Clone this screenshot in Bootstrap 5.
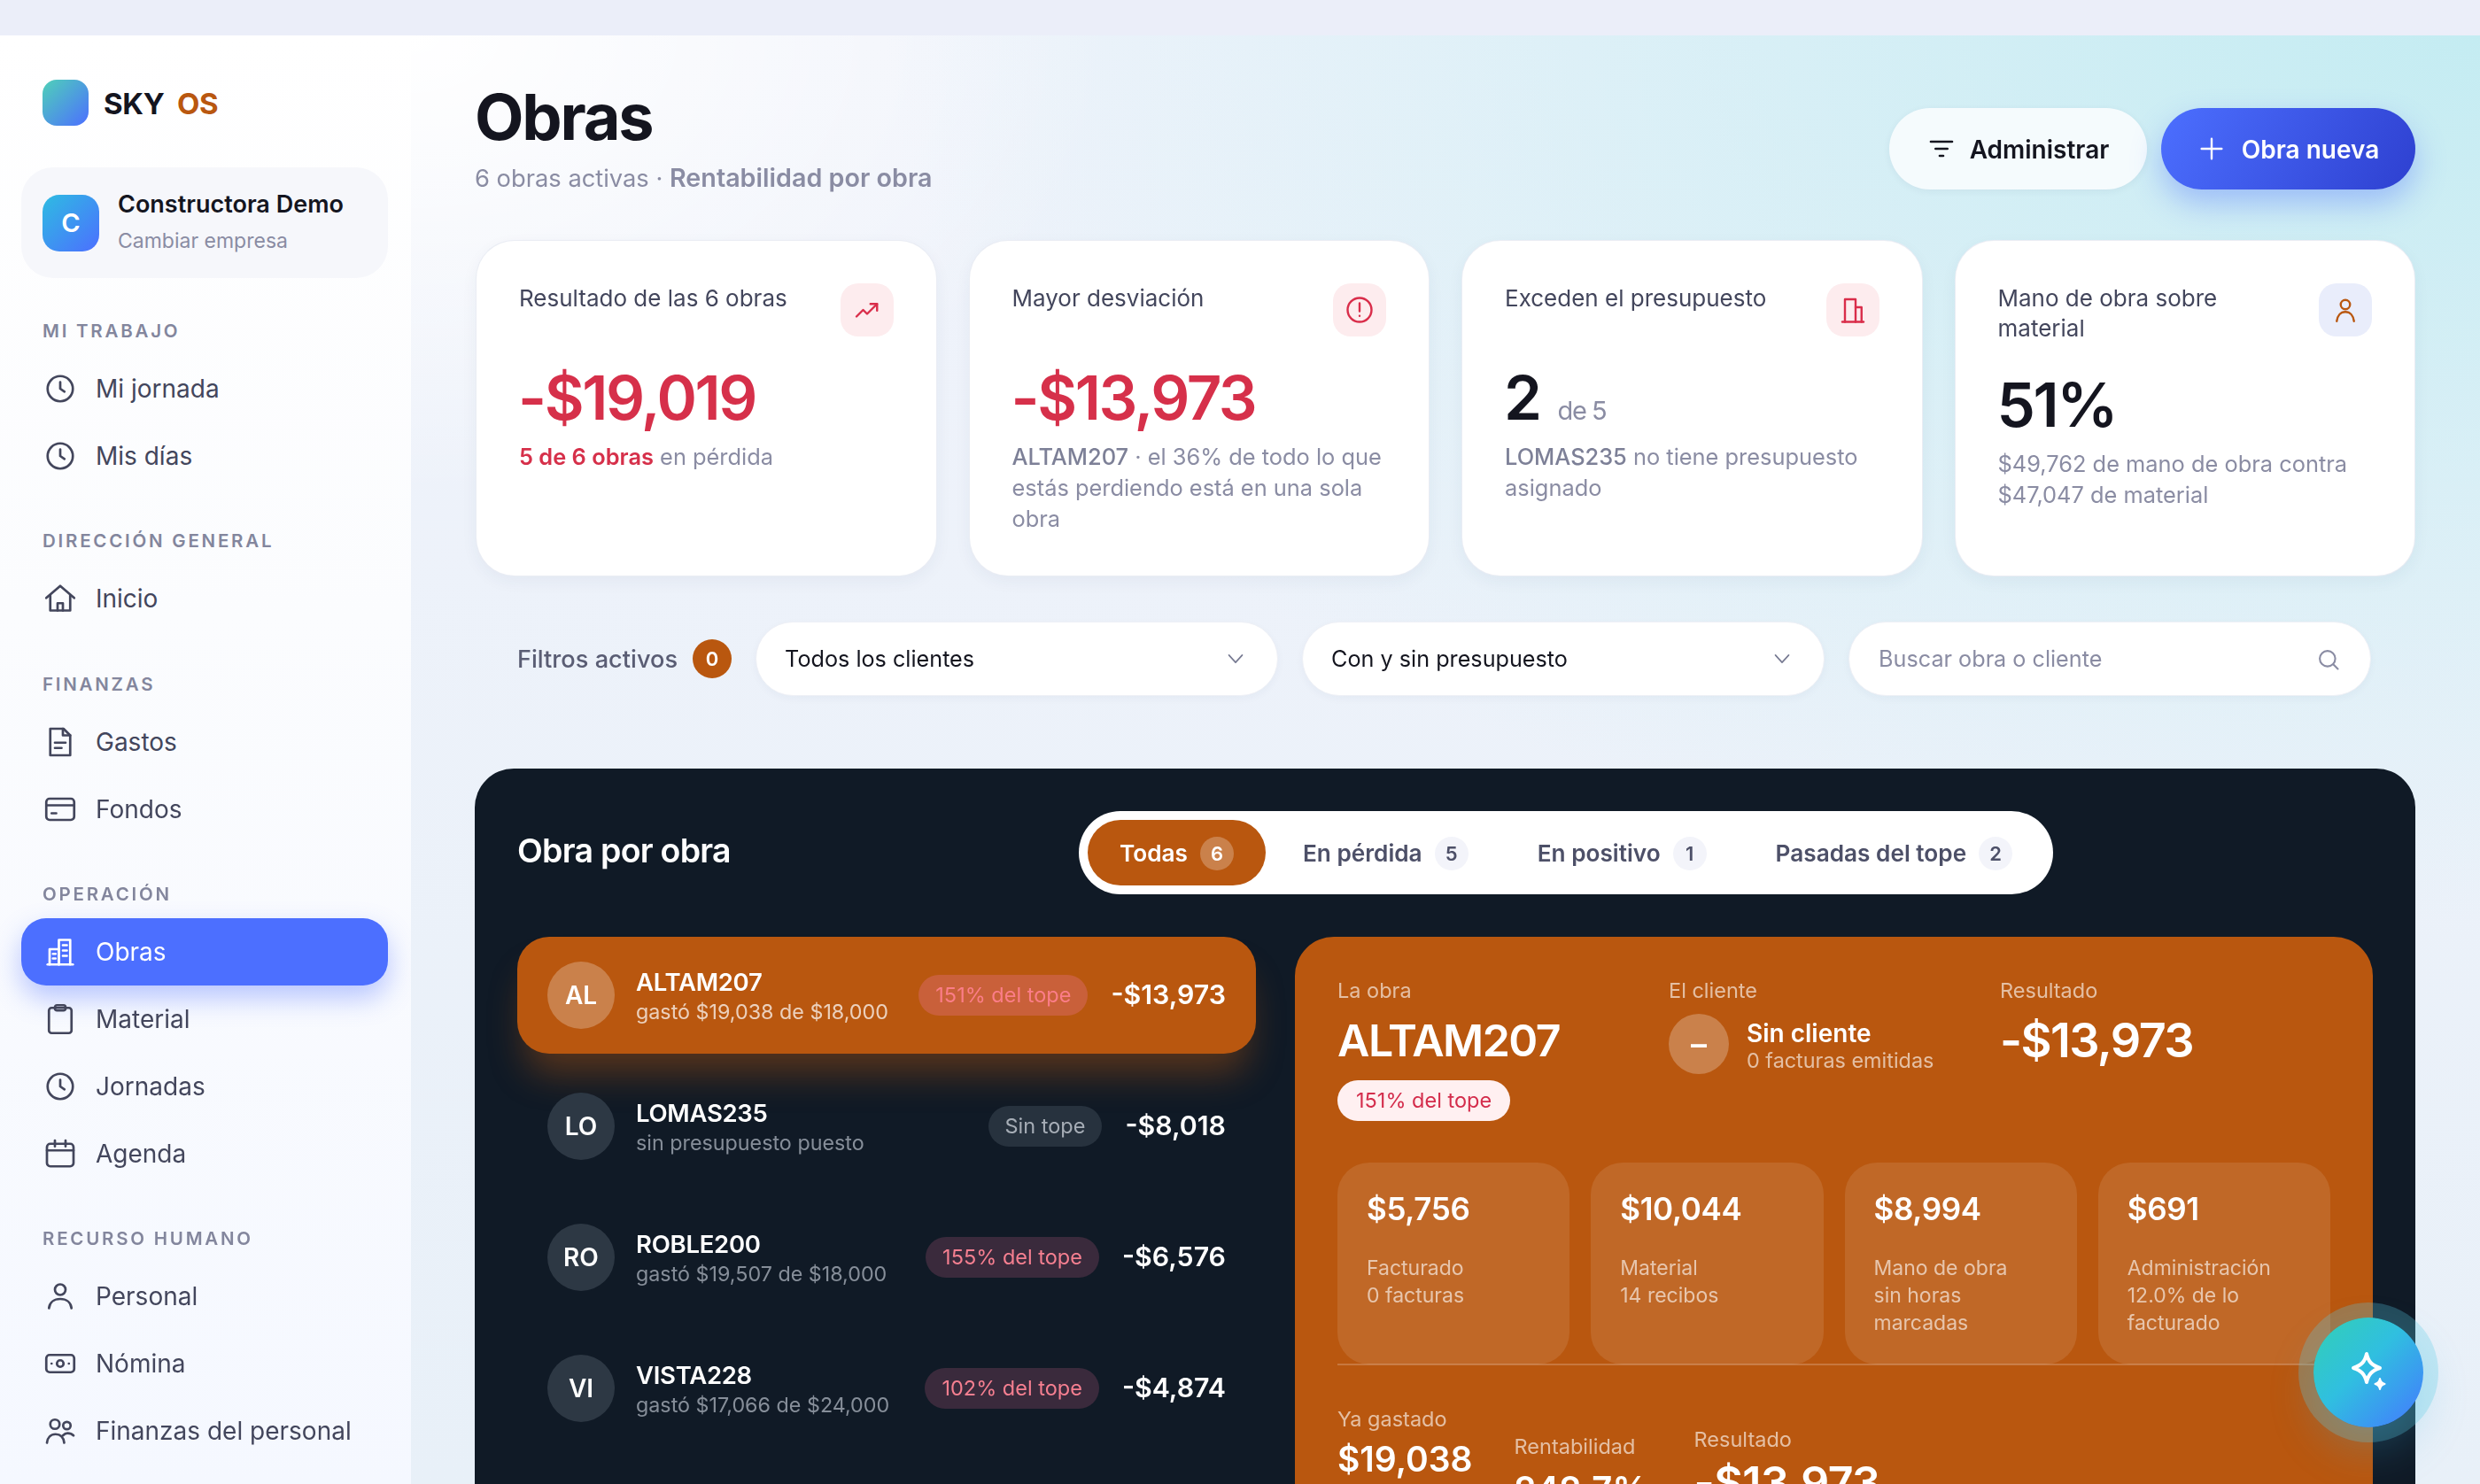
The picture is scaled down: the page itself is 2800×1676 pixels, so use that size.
<!DOCTYPE html>
<html lang="es">
<head>
    <meta charset="UTF-8">
    <meta name="viewport" content="width=device-width, initial-scale=1.0">
    <title>Obras - SKY OS</title>
    <link href="https://cdn.jsdelivr.net/npm/bootstrap@5.3.5/dist/css/bootstrap.min.css" rel="stylesheet">
    <style>
        html, body { height: 100%; }
        body { font-family: "Inter", "Liberation Sans", sans-serif; background: #ebeef9; color: #14151f; overflow: hidden; }
        .app-shell { position: fixed; top: 40px; left: 0; right: 0; bottom: 0; overflow: hidden; }
        .side-bar { width: 464px; flex: none; padding-top: 50px; background: linear-gradient(180deg, #ffffff 0%, #fbfcfe 40%, #f5f8ff 100%); }
        .logo-row { padding-left: 48px; height: 52px; gap: 17px; }
        .logo-box { width: 52px; height: 52px; border-radius: 16px; background: linear-gradient(135deg, #4fd1b8, #4c6fff); }
        .logo-txt { font-size: 33px; font-weight: 700; line-height: 1; padding-top: 3px; letter-spacing: -.01em; }
        .logo-txt span { color: #b9570f; margin-left: 7px; }
        .company-box { margin: 47px 26px 0 24px; height: 125px; border-radius: 36px; background: #f6f7fb; padding-left: 24px; gap: 21px; }
        .company-ava { width: 64px; height: 64px; border-radius: 19px; background: linear-gradient(135deg, #2ebce2, #4c6fff); color: #fff; font-size: 29px; font-weight: 600; }
        .company-name { font-size: 27px; font-weight: 600; line-height: 34px; }
        .company-sub { font-size: 23px; color: #8a8ca3; line-height: 34px; margin-top: 7px; }
        .nav-head { font-size: 20.500px; font-weight: 600; letter-spacing: .135em; color: #83869d; padding-left: 48px; line-height: 20px; margin-top: 48.250px; margin-bottom: 17px; white-space: nowrap; }
        .nav-head.first-head { margin-top: 50px; }
        .side-link { height: 76px; margin: 0 26px 0 24px; padding: 0 0 0 26px; gap: 22px; font-size: 28px; color: #43465c; border-radius: 28px; }
        .side-link svg { width: 36px; height: 36px; flex: none; fill: none; stroke: currentColor; stroke-width: 1.8; stroke-linecap: round; stroke-linejoin: round; }
        .side-link.active-link { background: #4c6fff; color: #fff; box-shadow: 0 14px 30px rgba(76, 111, 255, .38); }
        .main-area { flex: 1; min-width: 0; padding: 0 73px 0 72px; background:
            radial-gradient(1800px 1000px at 100% 0, #c4ecf2 0%, rgba(196, 236, 242, 0) 100%),
            radial-gradient(800px 520px at 0 0, #ffffff 0%, rgba(255, 255, 255, 0) 100%),
            linear-gradient(180deg, #f0f3fb, #e8f0f8); }
        .page-head { height: 231px; }
        .page-title { font-size: 72px; font-weight: 700; letter-spacing: -.03em; line-height: 86px; margin: 49px 0 0; }
        .page-sub { font-size: 27.300px; color: #8a8ca3; line-height: 36px; margin-top: 8px; }
        .page-sub b { font-size: 28.700px; font-weight: 600; }
        .top-btn { height: 92px; margin-top: 82px; border-radius: 46px; font-size: 28px; font-weight: 600; border: 0; gap: 16px; padding-top: 8px; }
        .top-btn svg { margin-top: -2px; }
        .btn-admin { width: 291px; background: #f5fbfd; color: #14151f; box-shadow: 0 2px 8px rgba(30, 50, 90, .06); }
        .btn-new { width: 287px; background: linear-gradient(120deg, #4c6fff, #2e40d0); color: #fff; box-shadow: 0 16px 34px rgba(76, 111, 255, .38); gap: 18px; }
        .kpi-grid { display: grid; grid-template-columns: repeat(4, 1fr); gap: 36px; margin-left: 1px; }
        .kpi-card { height: 380px; border: 1px solid rgba(225, 230, 240, .7); border-radius: 44px; padding: 48px; box-shadow: 0 6px 18px rgba(30, 50, 90, .05); }
        .kpi-label { font-size: 26px; line-height: 34px; color: #43465c; }
        .kpi-icon { width: 60px; height: 60px; flex: none; border-radius: 20px; background: #fdecee; color: #d92d4a; }
        .kpi-icon.soft-blue { background: #e9edfb; color: #b9570f; }
        .kpi-icon svg { width: 36px; height: 36px; fill: none; stroke: currentColor; stroke-width: 1.6; stroke-linecap: round; stroke-linejoin: round; }
        .kpi-val { font-size: 69px; font-weight: 600; letter-spacing: -.035em; height: 72px; line-height: 72px; margin-top: 33px; margin-left: -1px; white-space: nowrap; }
        .kpi-val.is-red { color: #d6304a; }
        .kpi-val small { font-size: 29px; font-weight: 400; line-height: 1; color: #8a8ca3; letter-spacing: -.05em; margin-left: 20px; }
        .kpi-sub { font-size: 25.400px; line-height: 35px; color: #8a8ca3; margin-top: 13px; }
        .kpi-sub b { color: #d6304a; font-weight: 600; }
        .kpi-sub em { font-style: normal; font-weight: 500; color: #7d8097; }
        .filter-row { margin-top: 51px; padding: 0 50px 0 48px; gap: 27px; height: 84px; }
        .filter-name { font-size: 27.200px; font-weight: 500; color: #5a5d74; white-space: nowrap; padding-top: 2px; }
        .filter-num { width: 44px; height: 44px; margin-left: 17px; border-radius: 50%; background: #b9570f; color: #fff; font-size: 22px; font-weight: 600; padding: 0; }
        .filter-sel { flex: none; width: 590px; height: 84px; border: 1px solid #eef0f6; border-radius: 42px; font-family: inherit; font-size: 25.200px; color: #14151f; padding: 2px 60px 0 32px; box-shadow: 0 3px 10px rgba(30, 50, 90, .04);
            --bs-form-select-bg-img: url("data:image/svg+xml,%3csvg xmlns='http://www.w3.org/2000/svg' viewBox='0 0 24 24'%3e%3cpath fill='none' stroke='%23777a92' stroke-width='2' stroke-linecap='round' stroke-linejoin='round' d='M3 7l9 10 9-10'/%3e%3c/svg%3e");
            background-position: right 37px center; background-size: 20px 20px; }
        .search-box { flex: none; width: 590px; height: 84px; background: #fff; border: 1px solid #eef0f6; border-radius: 42px; padding: 2px 33px 0; box-shadow: 0 3px 10px rgba(30, 50, 90, .04); }
        .search-box input { border: 0; padding: 0; font-size: 25.200px; font-family: inherit; background: transparent; box-shadow: none; }
        .search-box input::placeholder { color: #8a8ca3; opacity: 1; }
        .search-box svg { width: 28px; height: 28px; flex: none; fill: none; stroke: #8a8ca3; stroke-width: 1.8; stroke-linecap: round; }
        .dark-panel { margin-top: 82px; height: 900px; border-radius: 44px; background: #101a26; padding: 48px 48px 0 48px; }
        .panel-title { width: 634px; flex: none; font-size: 37.500px; font-weight: 600; letter-spacing: -.02em; color: #fff; margin: -6px 0 0; }
        .tab-pill { height: 94px; padding: 10px; gap: 6px; border-radius: 47px; background: #fff; }
        .tab-item { height: 74px; padding: 2px 36px 0; gap: 14px; border: 0; border-radius: 37px; background: transparent; font-size: 26.200px; font-weight: 600; color: #4d5068; white-space: nowrap; }
        .tab-item i { width: 38px; height: 38px; border-radius: 50%; background: #f3f4fa; font-style: normal; font-size: 22px; display: flex; align-items: center; justify-content: center; }
        .tab-item.tab-on { background: #b9570f; color: #fff; }
        .tab-item.tab-on i { background: rgba(255, 255, 255, .25); }
        .panel-body { margin-top: 48px; gap: 44px; }
        .obra-list { width: 834px; flex: none; gap: 16px; }
        .obra-row { height: 132px; border-radius: 36px; padding: 0 34px; gap: 24px; color: #fff; }
        .obra-row.row-on { background: #b9570f; box-shadow: 0 32px 40px -10px rgba(185, 87, 15, .42); }
        .obra-ava { width: 76px; height: 76px; flex: none; border-radius: 50%; background: #2d3844; font-size: 28px; font-weight: 600; }
        .row-on .obra-ava { background: rgba(255, 255, 255, .25); }
        .obra-name { font-size: 27.500px; font-weight: 600; line-height: 34px; letter-spacing: -.01em; padding-top: 2px; }
        .obra-info { font-size: 23.300px; line-height: 30px; color: #868e99; margin-top: 2px; white-space: nowrap; }
        .row-on .obra-info { color: rgba(255, 255, 255, .72); }
        .obra-tag { height: 46px; padding: 0 19px; border-radius: 23px; background: #3a2a3c; color: #f57f90; font-size: 23.500px; line-height: 46px; white-space: nowrap; }
        .obra-tag.tag-gray { background: #27323e; color: #a6adb6; }
        .row-on .obra-tag { background: #c9603a; color: #fb7d88; }
        .obra-amt { font-size: 30.300px; font-weight: 600; margin-left: 2px; white-space: nowrap; }
        .detail-box { flex: 1; min-width: 0; height: 800px; border-radius: 44px; background: #b9570f; color: #fff; padding: 46px 48px 0; }
        .det-cols { display: grid; grid-template-columns: repeat(3, 374px); height: 209px; }
        .det-lab { font-size: 23.500px; line-height: 30px; color: rgba(255, 255, 255, .62); white-space: nowrap; }
        .det-big { font-size: 54px; font-weight: 600; letter-spacing: -.03em; line-height: 62px; margin-top: 10px; }
        .det-big.det-code { font-size: 50px; }
        .det-tag { display: inline-block; height: 46px; line-height: 46px; padding: 0 21px; margin-top: 14px; border-radius: 23px; background: #fff0f1; color: #d42d4c; font-size: 23.500px; }
        .cli-row { gap: 20px; margin-top: 11px; }
        .cli-ava { width: 68px; height: 68px; flex: none; border-radius: 50%; background: rgba(255, 255, 255, .25); font-size: 36px; font-weight: 600; line-height: 1; }
        .cli-name { font-size: 28px; font-weight: 600; line-height: 32px; padding-top: 4px; }
        .cli-sub { font-size: 23.400px; line-height: 28px; color: rgba(255, 255, 255, .62); margin-top: 1px; white-space: nowrap; }
        .tile-grid { display: grid; grid-template-columns: repeat(4, 1fr); gap: 24px; border-bottom: 2px solid rgba(255, 255, 255, .2); }
        .stat-tile { height: 228px; margin-bottom: -1px; border-radius: 36px; background: rgba(255, 255, 255, .1); padding: 30px 33px; }
        .tile-val { font-size: 35px; font-weight: 600; line-height: 44px; letter-spacing: -.01em; }
        .tile-txt { font-size: 23px; line-height: 31px; color: rgba(255, 255, 255, .62); margin-top: 30px; }
        .sum-row { gap: 46px; }
        .sum-a { padding-top: 46px; }
        .sum-b { padding-top: 77px; margin-left: 1px; }
        .sum-c { padding-top: 69px; margin-left: 20px; }
        .sum-val { font-weight: 600; font-size: 39px; line-height: 48px; margin-top: 6px; }
        .sum-b .sum-val { font-size: 40px; text-align: right; margin-top: 9px; margin-right: -14px; }
        .sum-c .sum-val { font-size: 50px; margin-top: 9px; letter-spacing: -.01em; }
        .ai-fab { position: fixed; left: 2612px; top: 1488px; width: 124px; height: 124px; border: 0; border-radius: 50%; background: linear-gradient(135deg, #32d0b4 0%, #30bfe0 45%, #4478ff 100%); box-shadow: 0 0 0 17px rgba(90, 205, 230, .28), 0 24px 50px rgba(60, 180, 230, .25); padding: 0; }
        .ai-fab svg { width: 60px; height: 60px; }
    </style>
</head>
<body>
    <div class="app-shell d-flex">
        <aside class="side-bar">
            <div class="logo-row d-flex align-items-center">
                <div class="logo-box"></div>
                <div class="logo-txt">SKY <span>OS</span></div>
            </div>
            <div class="company-box d-flex align-items-center">
                <div class="company-ava d-flex align-items-center justify-content-center">C</div>
                <div>
                    <div class="company-name">Constructora Demo</div>
                    <div class="company-sub">Cambiar empresa</div>
                </div>
            </div>

            <div class="nav-head first-head">MI TRABAJO</div>
            <nav class="nav flex-column">
                <a class="side-link d-flex align-items-center text-decoration-none" href="#"><svg viewBox="0 0 24 24"><circle cx="12" cy="12" r="9.500"/><path d="M12 7v5l3.200 2.200"/></svg>Mi jornada</a>
                <a class="side-link d-flex align-items-center text-decoration-none" href="#"><svg viewBox="0 0 24 24"><circle cx="12" cy="12" r="9.500"/><path d="M12 7v5l3.200 2.200"/></svg>Mis días</a>
            </nav>

            <div class="nav-head">DIRECCIÓN GENERAL</div>
            <nav class="nav flex-column">
                <a class="side-link d-flex align-items-center text-decoration-none" href="#"><svg viewBox="0 0 24 24"><path d="M1.500 11.500 12 2.500l10.500 9"/><path d="M4.500 9.500v11.500h15V9.500"/><path d="M10 21v-5.500h4V21"/></svg>Inicio</a>
            </nav>

            <div class="nav-head">FINANZAS</div>
            <nav class="nav flex-column">
                <a class="side-link d-flex align-items-center text-decoration-none" href="#"><svg viewBox="0 0 24 24"><path d="M4.500 2h10l5 5v15h-15z"/><path d="M14 2v5h5.500"/><path d="M8 12.500h8M8 16.500h5"/></svg>Gastos</a>
                <a class="side-link d-flex align-items-center text-decoration-none" href="#"><svg viewBox="0 0 24 24"><rect x="1.500" y="4" width="21" height="16" rx="2.500"/><path d="M1.500 9h21M5.500 15h3.500"/></svg>Fondos</a>
            </nav>

            <div class="nav-head">OPERACIÓN</div>
            <nav class="nav flex-column">
                <a class="side-link active-link d-flex align-items-center text-decoration-none" href="#"><svg viewBox="0 0 24 24"><path d="M2.500 21.500h19"/><path d="M4 21.500V10h7v11.500"/><path d="M11 21.500V3h8.500v18.500"/><path d="M6.500 13.500h2M6.500 17h2M14 7h3M14 11h3M14 15h3"/></svg>Obras</a>
                <a class="side-link d-flex align-items-center text-decoration-none" href="#"><svg viewBox="0 0 24 24"><rect x="3.500" y="3.500" width="17" height="19" rx="2"/><rect x="8" y="1.500" width="8" height="4" rx="1.500"/></svg>Material</a>
                <a class="side-link d-flex align-items-center text-decoration-none" href="#"><svg viewBox="0 0 24 24"><circle cx="12" cy="12" r="9.500"/><path d="M12 7v5l3.200 2.200"/></svg>Jornadas</a>
                <a class="side-link d-flex align-items-center text-decoration-none" href="#"><svg viewBox="0 0 24 24"><rect x="2" y="4.500" width="20" height="17" rx="2.500"/><path d="M2 9.500h20M8 2v4.500M16 2v4.500"/></svg>Agenda</a>
            </nav>

            <div class="nav-head">RECURSO HUMANO</div>
            <nav class="nav flex-column">
                <a class="side-link d-flex align-items-center text-decoration-none" href="#"><svg viewBox="0 0 24 24"><circle cx="12" cy="7" r="4"/><path d="M3.500 21c.5-4.500 4-7 8.500-7s8 2.500 8.500 7"/></svg>Personal</a>
                <a class="side-link d-flex align-items-center text-decoration-none" href="#"><svg viewBox="0 0 24 24"><rect x="1.500" y="5.500" width="21" height="13" rx="2.500"/><circle cx="12" cy="12" r="2.500"/><path d="M5.500 12h.01M18.500 12h.01"/></svg>Nómina</a>
                <a class="side-link d-flex align-items-center text-decoration-none" href="#"><svg viewBox="0 0 24 24"><circle cx="8" cy="7" r="3.500"/><circle cx="17" cy="8" r="2.800"/><path d="M2 21c.4-4 2.800-6.500 6.500-6.500s6 2.500 6.500 6.500"/><path d="M14 15.500c1-1 2.500-1.700 3.500-1.700 2 0 3.500 .7 4.500 1.700"/></svg>Finanzas del personal</a>
            </nav>
        </aside>

        <main class="main-area">
            <div class="page-head d-flex justify-content-between">
                <div>
                    <h1 class="page-title">Obras</h1>
                    <div class="page-sub">6 obras activas · <b>Rentabilidad por obra</b></div>
                </div>
                <div class="d-flex gap-3">
                    <button class="btn top-btn btn-admin d-flex align-items-center justify-content-center">
                        <svg width="32" height="32" viewBox="0 0 24 24" fill="none" stroke="currentColor" stroke-width="2" stroke-linecap="round"><path d="M3 6h18M7 12h10M10.500 18h3"/></svg>Administrar
                    </button>
                    <button class="btn top-btn btn-new d-flex align-items-center justify-content-center">
                        <svg width="32" height="32" viewBox="0 0 24 24" fill="none" stroke="currentColor" stroke-width="1.800" stroke-linecap="round"><path d="M12 3.500v17M3.500 12h17"/></svg>Obra nueva
                    </button>
                </div>
            </div>

            <div class="kpi-grid">
                <div class="card kpi-card">
                    <div class="d-flex justify-content-between gap-3">
                        <div class="kpi-label">Resultado de las 6 obras</div>
                        <div class="kpi-icon d-flex align-items-center justify-content-center"><svg viewBox="0 0 24 24"><path d="M4 17l5-5 3 3 7.500-7.500"/><path d="M14.500 7.500h5v5"/></svg></div>
                    </div>
                    <div class="kpi-val is-red">-$19,019</div>
                    <div class="kpi-sub"><b>5 de 6 obras</b> en pérdida</div>
                </div>
                <div class="card kpi-card">
                    <div class="d-flex justify-content-between gap-3">
                        <div class="kpi-label">Mayor desviación</div>
                        <div class="kpi-icon d-flex align-items-center justify-content-center"><svg viewBox="0 0 24 24"><circle cx="12" cy="12" r="9"/><path d="M12 7v6M12 16.500h.01"/></svg></div>
                    </div>
                    <div class="kpi-val is-red">-$13,973</div>
                    <div class="kpi-sub"><em>ALTAM207</em> · el 36% de todo lo que estás perdiendo está en una sola obra</div>
                </div>
                <div class="card kpi-card">
                    <div class="d-flex justify-content-between gap-3">
                        <div class="kpi-label">Exceden el presupuesto</div>
                        <div class="kpi-icon d-flex align-items-center justify-content-center"><svg viewBox="0 0 24 24"><path d="M4 21h16"/><path d="M6 21V4h8v17"/><path d="M14 10h4.500v11"/></svg></div>
                    </div>
                    <div class="kpi-val">2<small>de 5</small></div>
                    <div class="kpi-sub"><em>LOMAS235</em> no tiene presupuesto asignado</div>
                </div>
                <div class="card kpi-card">
                    <div class="d-flex justify-content-between gap-3">
                        <div class="kpi-label">Mano de obra sobre material</div>
                        <div class="kpi-icon soft-blue d-flex align-items-center justify-content-center"><svg viewBox="0 0 24 24"><circle cx="12" cy="8" r="3.500"/><path d="M5.500 20.500c.5-4 2.800-7 6.500-7s6 3 6.500 7"/></svg></div>
                    </div>
                    <div class="kpi-val">51%</div>
                    <div class="kpi-sub">$49,762 de mano de obra contra $47,047 de material</div>
                </div>
            </div>

            <div class="filter-row d-flex align-items-center">
                <div class="d-flex align-items-center">
                    <span class="filter-name">Filtros activos</span>
                    <span class="badge filter-num d-flex align-items-center justify-content-center">0</span>
                </div>
                <select class="form-select filter-sel"><option>Todos los clientes</option></select>
                <select class="form-select filter-sel"><option>Con y sin presupuesto</option></select>
                <div class="search-box d-flex align-items-center">
                    <input class="form-control" placeholder="Buscar obra o cliente">
                    <svg viewBox="0 0 24 24"><circle cx="11" cy="11" r="7.500"/><path d="M17 17l4 4"/></svg>
                </div>
            </div>

            <section class="dark-panel">
                <div class="d-flex align-items-center">
                    <h2 class="panel-title">Obra por obra</h2>
                    <div class="tab-pill d-flex">
                        <button class="tab-item tab-on d-flex align-items-center">Todas <i>6</i></button>
                        <button class="tab-item d-flex align-items-center">En pérdida <i>5</i></button>
                        <button class="tab-item d-flex align-items-center">En positivo <i>1</i></button>
                        <button class="tab-item d-flex align-items-center">Pasadas del tope <i>2</i></button>
                    </div>
                </div>

                <div class="panel-body d-flex">
                    <div class="obra-list d-flex flex-column">
                        <div class="obra-row row-on d-flex align-items-center">
                            <div class="obra-ava d-flex align-items-center justify-content-center">AL</div>
                            <div class="flex-grow-1">
                                <div class="obra-name">ALTAM207</div>
                                <div class="obra-info">gastó $19,038 de $18,000</div>
                            </div>
                            <span class="obra-tag">151% del tope</span>
                            <span class="obra-amt">-$13,973</span>
                        </div>
                        <div class="obra-row d-flex align-items-center">
                            <div class="obra-ava d-flex align-items-center justify-content-center">LO</div>
                            <div class="flex-grow-1">
                                <div class="obra-name">LOMAS235</div>
                                <div class="obra-info">sin presupuesto puesto</div>
                            </div>
                            <span class="obra-tag tag-gray">Sin tope</span>
                            <span class="obra-amt">-$8,018</span>
                        </div>
                        <div class="obra-row d-flex align-items-center">
                            <div class="obra-ava d-flex align-items-center justify-content-center">RO</div>
                            <div class="flex-grow-1">
                                <div class="obra-name">ROBLE200</div>
                                <div class="obra-info">gastó $19,507 de $18,000</div>
                            </div>
                            <span class="obra-tag">155% del tope</span>
                            <span class="obra-amt">-$6,576</span>
                        </div>
                        <div class="obra-row d-flex align-items-center">
                            <div class="obra-ava d-flex align-items-center justify-content-center">VI</div>
                            <div class="flex-grow-1">
                                <div class="obra-name">VISTA228</div>
                                <div class="obra-info">gastó $17,066 de $24,000</div>
                            </div>
                            <span class="obra-tag">102% del tope</span>
                            <span class="obra-amt">-$4,874</span>
                        </div>
                    </div>

                    <div class="detail-box">
                        <div class="det-cols">
                            <div>
                                <div class="det-lab">La obra</div>
                                <div class="det-big det-code">ALTAM207</div>
                                <span class="det-tag">151% del tope</span>
                            </div>
                            <div>
                                <div class="det-lab">El cliente</div>
                                <div class="cli-row d-flex align-items-center">
                                    <div class="cli-ava d-flex align-items-center justify-content-center">–</div>
                                    <div>
                                        <div class="cli-name">Sin cliente</div>
                                        <div class="cli-sub">0 facturas emitidas</div>
                                    </div>
                                </div>
                            </div>
                            <div>
                                <div class="det-lab">Resultado</div>
                                <div class="det-big">-$13,973</div>
                            </div>
                        </div>

                        <div class="tile-grid">
                            <div class="stat-tile">
                                <div class="tile-val">$5,756</div>
                                <div class="tile-txt">Facturado<br>0 facturas</div>
                            </div>
                            <div class="stat-tile">
                                <div class="tile-val">$10,044</div>
                                <div class="tile-txt">Material<br>14 recibos</div>
                            </div>
                            <div class="stat-tile">
                                <div class="tile-val">$8,994</div>
                                <div class="tile-txt">Mano de obra<br>sin horas<br>marcadas</div>
                            </div>
                            <div class="stat-tile">
                                <div class="tile-val">$691</div>
                                <div class="tile-txt">Administración<br>12.0% de lo<br>facturado</div>
                            </div>
                        </div>

                        <div class="sum-row d-flex align-items-start">
                            <div class="sum-a">
                                <div class="det-lab">Ya gastado</div>
                                <div class="sum-val">$19,038</div>
                            </div>
                            <div class="sum-b">
                                <div class="det-lab">Rentabilidad</div>
                                <div class="sum-val">242.7%</div>
                            </div>
                            <div class="sum-c">
                                <div class="det-lab">Resultado</div>
                                <div class="sum-val">-$13,973</div>
                            </div>
                        </div>
                    </div>
                </div>
            </section>
        </main>
    </div>

    <button class="ai-fab d-flex align-items-center justify-content-center" aria-label="Asistente">
        <svg viewBox="0 0 60 60" fill="none" stroke="#fff" stroke-width="4" stroke-linejoin="round"><path d="M28 9c2 9 6 13 15 16-9 3-13 7-15 16-2-9-6-13-15-16 9-3 13-7 15-16z"/><path d="M43 37c.8 3.500 2 5 5.500 6-3.500 1-4.700 2.500-5.500 6-.8-3.500-2-5-5.500-6 3.500-1 4.700-2.500 5.500-6z" fill="#fff" stroke-width="2"/></svg>
    </button>

    <script src="https://cdn.jsdelivr.net/npm/bootstrap@5.3.5/dist/js/bootstrap.bundle.min.js"></script>
</body>
</html>
